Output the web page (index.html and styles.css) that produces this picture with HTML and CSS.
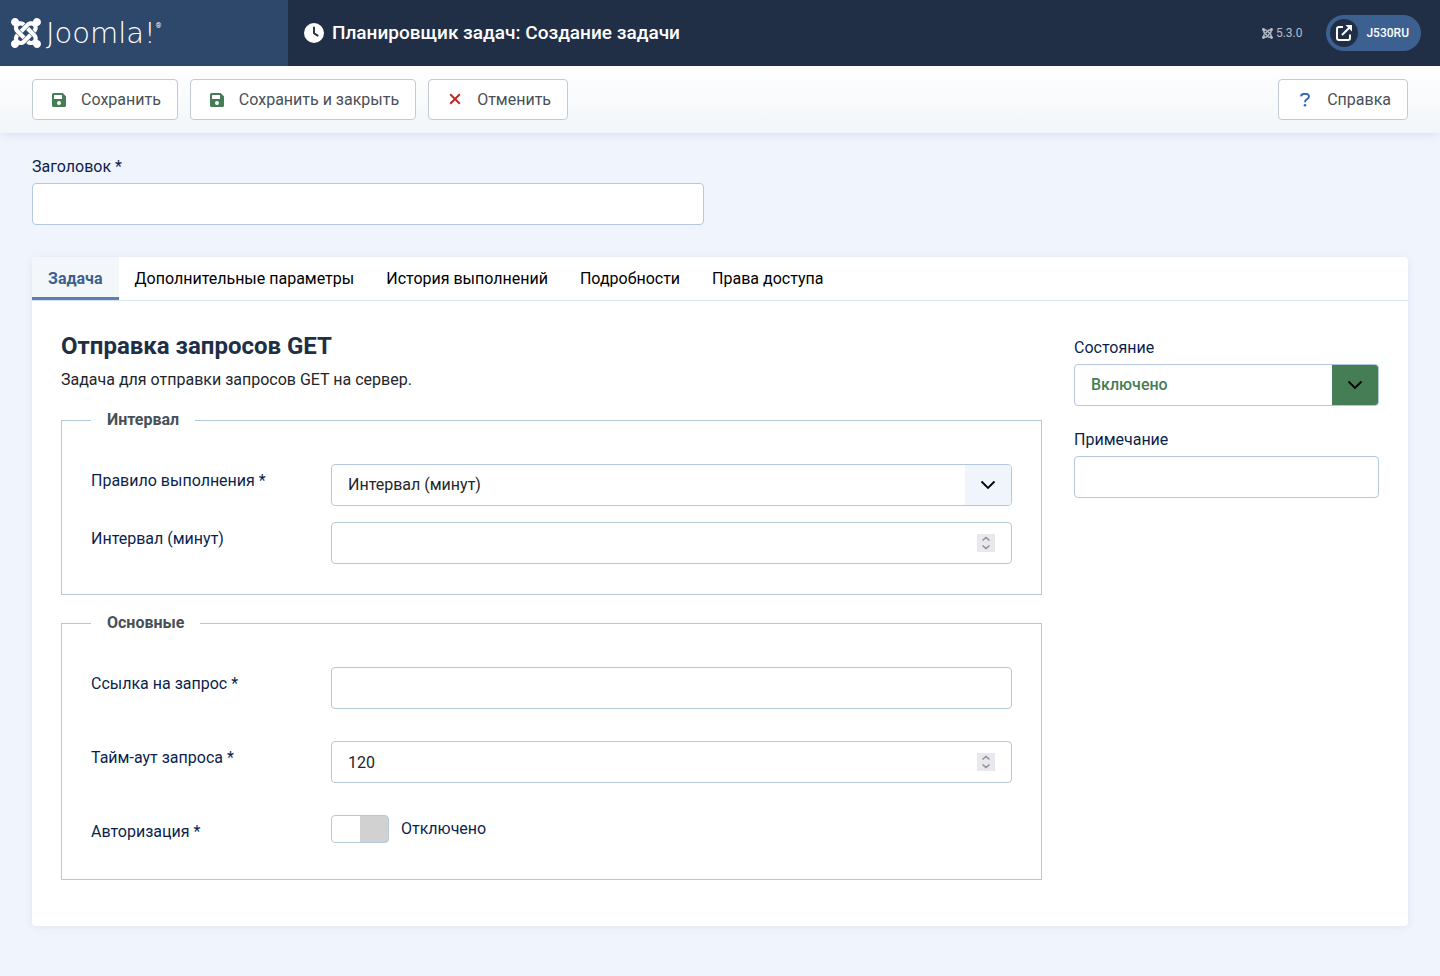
FILE: index.html
```html
<!DOCTYPE html>
<html lang="ru">
<head>
<meta charset="utf-8">
<meta name="viewport" content="width=device-width, initial-scale=1">
<title>Планировщик задач: Создание задачи</title>
<link rel="stylesheet" href="styles.css">
</head>
<body>
<svg class="sprite" aria-hidden="true">
  <symbol id="joomla" viewBox="0 32 448 448"><path d="M.6 92.1C.6 58.8 27.4 32 60.4 32c30 0 54.5 21.9 59.2 50.2 32.6-7.6 67.1.6 96.5 30l-44.3 44.3c-20.5-20.5-42.6-16.3-55.4-3.5-14.3 14.3-14.3 37.9 0 52.2l99.5 99.5-44 44.3c-87.7-87.2-49.7-49.7-99.8-99.7-26.8-26.5-35-64.8-24.8-98.9C20.4 144.6.6 120.7.6 92.1zm129.5 116.4l44.3 44.3c10-10 89.7-89.7 99.7-99.8 14.3-14.3 37.6-14.3 51.9 0 12.8 12.8 17 35-3.5 55.4l44 44.3c31.2-31.2 38.5-67.6 28.9-101.2 29.2-4.1 51.9-29.2 51.9-59.5 0-33.2-26.8-60.1-59.8-60.1-30.3 0-55.4 22.5-59.5 51.6-33.8-9.9-71.7-1.5-98.3 25.1-18.3 19.1-71.1 71.5-99.6 99.9zm266.3 152.2c8.2-32.7-.9-68.5-26.3-93.9-11.8-12.2 5 4.7-99.5-99.7l-44.3 44.3 99.7 99.7c14.3 14.3 14.3 37.6 0 51.9-12.8 12.8-35 17-55.4-3.5l-44 44.3c27.6 30.2 68 38.8 102.7 28 5.5 27.4 29.7 48.1 58.9 48.1 33 0 59.8-26.8 59.8-60.1 0-30.2-22.5-55-51.6-59.1zm-84.3-53.1l-44-44.3c-87 86.4-50.4 50.4-99.7 99.8-14.3 14.3-37.6 14.3-51.9 0-13.1-13.4-16.9-35.3 3.2-55.4l-44-44.3c-30.2 30.2-38 65.2-29.5 98.3-26.7 6-46.2 29.9-46.2 58.2C0 453.2 26.8 480 59.8 480c28.6 0 52.5-19.8 58.6-46.7 32.7 8.2 68.5-.6 94.2-26 32.1-32 12.2-12.4 99.5-99.7z"/></symbol>
  <symbol id="save" viewBox="0 0 14 14"><path fill-rule="evenodd" d="M1.500 0H10.600L14 3.200V12.500Q14 14 12.500 14H1.500Q0 14 0 12.500V1.500Q0 0 1.500 0ZM2.500 2Q2 2 2 2.500V5.500Q2 6 2.500 6H9.500Q10 6 10 5.500V2.500Q10 2 9.500 2ZM7 8A2 2 0 1 0 7 12A2 2 0 1 0 7 8Z"/></symbol>
  <symbol id="chevron" viewBox="0 0 16 16"><path d="M1.500 4.500 8 11 14.500 4.500" fill="none" stroke="#000" stroke-width="1.800"/></symbol>
  <symbol id="spinner" viewBox="0 0 18 18"><path fill="#e9e8ed" d="M0 0h18v18H0z"/><path d="M5.500 6.500 9 3.500 12.500 6.500M5.500 11.500 9 14.500 12.500 11.500" fill="none" stroke="#8f8d99" stroke-width="1.500"/></symbol>
</svg>

<header class="header">
  <a class="logo" href="#" aria-label="Joomla!">
    <svg class="logo-mark" aria-hidden="true"><use href="#joomla"/></svg>
    <span class="logo-text">Joomla!</span><sup class="logo-reg">®</sup>
  </a>
  <h1 class="page-title">
    <svg class="clock" viewBox="0 0 20 20" aria-hidden="true"><circle cx="10" cy="10" r="10"/><path d="M10 4.500V10.200L13.600 12.600" fill="none" stroke="#212f46" stroke-width="1.900" stroke-linecap="round"/></svg>
    Планировщик задач: Создание задачи
  </h1>
  <div class="header-items">
    <span class="version"><svg aria-hidden="true"><use href="#joomla"/></svg>5.3.0</span>
    <a class="site-link" href="#">
      <span class="site-icon"><svg viewBox="0 0 16 16" aria-hidden="true"><path d="M7 2H3Q1 2 1 4V13Q1 15 3 15H12Q14 15 14 13V9.500M6 10 13.500 2.500" fill="none" stroke="#fff" stroke-width="2"/><path d="M9.500 0H16V6.500z" fill="#fff"/></svg></span>
      J530RU
    </a>
  </div>
</header>

<div class="toolbar">
  <button class="btn" type="button"><svg class="green" aria-hidden="true"><use href="#save"/></svg>Сохранить</button>
  <button class="btn" type="button"><svg class="green" aria-hidden="true"><use href="#save"/></svg>Сохранить и закрыть</button>
  <button class="btn" type="button"><svg viewBox="0 0 14 14" aria-hidden="true"><path d="M2.200 1.200 11.800 10.800M11.800 1.200 2.200 10.800" stroke="#c52827" stroke-width="2"/></svg>Отменить</button>
  <button class="btn help" type="button"><svg viewBox="0 0 14 14" aria-hidden="true"><path d="M3 3.300Q3.200 .8 7 .8Q11 .8 11 3.600Q11 5.100 8.800 6.300Q7 7.200 7 9.300" fill="none" stroke="#2a69b8" stroke-width="1.900"/><circle cx="7" cy="12.300" r="1.300" fill="#2a69b8"/></svg>Справка</button>
</div>

<main class="main">
  <div class="field title-field">
    <label for="title">Заголовок *</label>
    <input class="control" id="title" type="text" required>
  </div>

  <section class="card">
    <div class="tabs" role="tablist">
      <button class="tab active" type="button" role="tab" aria-selected="true">Задача</button>
      <button class="tab" type="button" role="tab">Дополнительные параметры</button>
      <button class="tab" type="button" role="tab">История выполнений</button>
      <button class="tab" type="button" role="tab">Подробности</button>
      <button class="tab" type="button" role="tab">Права доступа</button>
    </div>
    <div class="panel">
      <div>
        <h2>Отправка запросов GET</h2>
        <p class="intro">Задача для отправки запросов GET на сервер.</p>

        <fieldset class="group">
          <legend>Интервал</legend>
          <div class="rows rows-tight">
            <div class="row">
              <label for="rule">Правило выполнения *</label>
              <div class="wrap">
                <select class="control" id="rule"><option>Интервал (минут)</option></select>
                <span class="arrow"><svg aria-hidden="true"><use href="#chevron"/></svg></span>
              </div>
            </div>
            <div class="row">
              <label for="interval">Интервал (минут)</label>
              <div class="wrap">
                <input class="control" id="interval" type="number">
                <svg class="spin" aria-hidden="true"><use href="#spinner"/></svg>
              </div>
            </div>
          </div>
        </fieldset>

        <fieldset class="group">
          <legend>Основные</legend>
          <div class="rows">
            <div class="row">
              <label for="url">Ссылка на запрос *</label>
              <input class="control" id="url" type="text">
            </div>
            <div class="row">
              <label for="timeout">Тайм-аут запроса *</label>
              <div class="wrap">
                <input class="control" id="timeout" type="number" value="120">
                <svg class="spin" aria-hidden="true"><use href="#spinner"/></svg>
              </div>
            </div>
            <div class="row">
              <label for="auth">Авторизация *</label>
              <div class="switch">
                <input id="auth" type="checkbox" role="switch">
                <span>Отключено</span>
              </div>
            </div>
          </div>
        </fieldset>
      </div>

      <div class="side">
        <div class="field">
          <label for="state">Состояние</label>
          <div class="wrap">
            <select class="control state" id="state"><option>Включено</option></select>
            <span class="arrow arrow-green"><svg aria-hidden="true"><use href="#chevron"/></svg></span>
          </div>
        </div>
        <div class="field">
          <label for="note">Примечание</label>
          <input class="control" id="note" type="text">
        </div>
      </div>
    </div>
  </section>
</main>
</body>
</html>
```

FILE: styles.css
```css
* { box-sizing: border-box; }

body {
  margin: 0;
  min-height: 100vh;
  background: #f0f4fd;
  color: #22262a;
  font: 16px/24px Roboto, "Noto Sans", sans-serif;
}

button, input, select { font: inherit; }
.sprite { position: absolute; width: 0; height: 0; }

.header {
  display: flex;
  align-items: center;
  height: 66px;
  background: #212f46;
  color: #fff;
}

.logo {
  display: flex;
  align-items: center;
  align-self: stretch;
  flex: 0 0 288px;
  padding-left: 11px;
  background: #2e486b;
  color: #fff;
  text-decoration: none;
}
.logo-mark { width: 30px; height: 30px; margin-right: 5px; fill: #fff; }
.logo-text { font: 200 29px/32px "DejaVu Sans", sans-serif; }
.logo-reg { align-self: flex-start; margin-top: 20px; font-size: 7px; line-height: 12px; }

.page-title {
  display: flex;
  align-items: center;
  gap: 8px;
  flex: 1;
  margin: 0;
  padding-left: 16px;
  font-size: 19px;
  font-weight: 500;
}
.clock { width: 20px; height: 20px; fill: #fff; }

.header-items { display: flex; align-items: center; gap: 24px; padding-right: 19px; }
.version { display: flex; align-items: center; gap: 3px; color: #b5bdca; font-size: 12px; }
.version svg { width: 11px; height: 11px; fill: #b5bdca; }
.site-link {
  display: flex;
  align-items: center;
  gap: 8px;
  height: 36px;
  padding: 0 12px 0 4px;
  border-radius: 18px;
  background: #3c6090;
  color: #fff;
  font-size: 12px;
  font-weight: 500;
  text-decoration: none;
}
.site-icon { display: grid; place-items: center; width: 28px; height: 28px; border-radius: 50%; background: #212f46; }
.site-icon svg { width: 16px; height: 16px; }

.toolbar {
  display: flex;
  gap: 12px;
  padding: 13px 32px;
  background: linear-gradient(#fff, #f2f6f9);
  box-shadow: 0 2px 10px -2px rgba(30, 60, 120, .15);
}
.btn {
  display: flex;
  align-items: center;
  gap: 15px;
  height: 41px;
  padding: 0 16px 0 19px;
  border: 1px solid #c2cad6;
  border-radius: 4px;
  background: #fff;
  color: #495057;
}
.btn svg { width: 14px; height: 14px; }
.green { fill: #457d54; }
.help { margin-left: auto; }

.main { padding: 22px 32px 50px; }
.field { display: grid; gap: 4px; }
label, .switch { color: #0b1f4e; }
.title-field { width: calc(50% - 16px); }

.control {
  display: block;
  width: 100%;
  height: 42px;
  padding: 0 16px;
  border: 1px solid #b5c6df;
  border-radius: 4px;
  background: #fff;
  color: #22262a;
  appearance: none;
}
.control[type="number"] { appearance: textfield; }
.state { color: #457d54; font-weight: 500; }

.wrap { position: relative; }
.arrow {
  position: absolute;
  inset: 1px 1px 1px auto;
  display: grid;
  place-items: center;
  width: 46px;
  border-radius: 0 3px 3px 0;
  background: #f0f4fb;
  pointer-events: none;
}
.arrow-green { background: #457d54; }
.arrow svg { width: 16px; height: 16px; }
.spin { position: absolute; top: 12px; right: 17px; width: 18px; height: 18px; pointer-events: none; }

.card {
  margin-top: 32px;
  border-radius: 4px;
  background: #fff;
  box-shadow: 0 1px 8px rgba(30, 60, 120, .08);
}
.tabs { display: flex; border-bottom: 1px solid #dbe4f0; }
.tab {
  height: 43px;
  padding: 3px 16px 0;
  border: 0;
  border-bottom: 3px solid transparent;
  background: none;
  color: #000;
}
.tab.active { border-color: #5e81ab; border-radius: 4px 0 0; background: #f3f7fa; color: #3c6090; font-weight: 700; }

.panel {
  display: grid;
  grid-template-columns: minmax(0, 981fr) minmax(0, 305fr);
  gap: 32px;
  padding: 31px 29px 46px;
}
h2 { margin: 0 0 8px; color: #212f46; font-size: 24px; font-weight: 700; line-height: 28px; }
.intro { margin: 0; }

.group { min-width: 0; margin: 16px 0 0; padding: 0 29px 30px; border: 1px solid #b5c6df; }
legend { padding: 0 16px; color: #495057; font-weight: 700; }
.rows { display: grid; gap: 32px; padding-top: 32px; }
.rows-tight { gap: 16px; }
.row { display: grid; grid-template-columns: 240px minmax(0, 1fr); }
.row label { padding: 5px 0; }

.switch { display: flex; align-items: center; align-self: start; gap: 12px; }
.switch input {
  width: 58px;
  height: 28px;
  margin: 0;
  border: 1px solid #b5c6df;
  border-radius: 4px;
  background: linear-gradient(90deg, #fff 50%, #d1d1d1 50%);
  appearance: none;
}

.side { display: grid; align-content: start; gap: 22px; padding-top: 4px; }
```
